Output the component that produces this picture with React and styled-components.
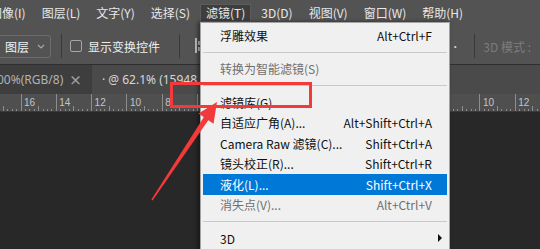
import React from "react";
import styled, { createGlobalStyle, css } from "styled-components";

const GlobalStyle = createGlobalStyle`
	html, body {
		margin: 0;
		padding: 0;
		background: #282828;
		overflow: hidden;
	}
	body {
		font-family: "Noto Sans CJK SC", "Noto Sans", sans-serif;
	}
`;

const menus = ["图像(I)", "图层(L)", "文字(Y)", "选择(S)", "滤镜(T)", "3D(D)", "视图(V)", "窗口(W)", "帮助(H)"];

const filterItems = [
	{ label: "浮雕效果", keys: "Alt+Ctrl+F" },
	{ sep: true },
	{ label: "转换为智能滤镜(S)", disabled: true },
	{ sep: true },
	{ label: "滤镜库(G)..." },
	{ label: "自适应广角(A)...", keys: "Alt+Shift+Ctrl+A" },
	{ label: "Camera Raw 滤镜(C)...", keys: "Shift+Ctrl+A" },
	{ label: "镜头校正(R)...", keys: "Shift+Ctrl+R" },
	{ label: "液化(L)...", keys: "Shift+Ctrl+X", active: true },
	{ label: "消失点(V)...", keys: "Alt+Ctrl+V", disabled: true },
	{ sep: true },
	{ label: "3D", sub: true },
];

// the part of the ruler under the menu is hidden anyway, so only label what shows
const Ruler = () => {
	const major = 35.3;
	const ticks = [];
	const labels = [];
	for (let k = -1; k < 16; k++) {
		const x = 21 + major * k;
		ticks.push(<line key={"M" + k} x1={x} y1={0} x2={x} y2={17} />);
		for (let s = 1; s < 8; s++) {
			const sx = x + (major / 8) * s;
			const h = s === 4 ? 5 : 2;
			ticks.push(<line key={k + "-" + s} x1={sx} y1={17 - h} x2={sx} y2={17} />);
		}
		if (x > 0 && (x < 190 || (x > 452 && x < 525))) {
			labels.push(
				<text key={"t" + k} x={x + 3} y={12}>
					{Math.abs(16 - 2 * k)}
				</text>
			);
		}
	}
	return (
		<RulerSvg width="540" height="17">
			<g stroke="#8d8d8d" strokeWidth="1" shapeRendering="crispEdges">
				{ticks}
			</g>
			<g fill="#c4c4c4" fontSize="10" fontFamily="'Liberation Sans', sans-serif">
				{labels}
			</g>
		</RulerSvg>
	);
};

export default function App() {
	return (
		<Page>
			<GlobalStyle />
			<MenuBar>
				<MenuList>
					{menus.map(m => (
						<MenuTitle key={m} $open={m === "滤镜(T)"}>
							{m}
						</MenuTitle>
					))}
				</MenuList>
			</MenuBar>

			<OptionsBar>
				<LayerSelect>
					图层
					<Chevron viewBox="0 0 8 5" width="8" height="5">
						<path d="M1 1l3 3 3-3" fill="none" stroke="#a8a8a8" strokeWidth="1.2" />
					</Chevron>
				</LayerSelect>
				<Divider $ml={10} />
				<Check />
				<OptionLabel>显示变换控件</OptionLabel>
				<Divider $ml={19} />
				<AlignIcon viewBox="0 0 14 16" width="14" height="16">
					<rect x="0" y="0" width="2" height="15" fill="#bdbdbd" />
					<rect x="3" y="3" width="7" height="4" fill="#bdbdbd" />
					<rect x="3" y="9" width="11" height="4" fill="#bdbdbd" />
				</AlignIcon>
				<RightGroup>
					<Dots>••</Dots>
					<Divider $ml={14} />
					<ModeLabel>3D 模式 :</ModeLabel>
				</RightGroup>
			</OptionsBar>

			<TabBar>
				<Tab>
					<TabText>00%(RGB/8)</TabText>
					<Close>×</Close>
				</Tab>
				<Tab $active>
					<TabText $active>· @ 62.1% (15948</TabText>
				</Tab>
			</TabBar>

			<Ruler />
			<Canvas />

			<Dropdown>
				{filterItems.map((it, i) =>
					it.sep ? (
						<Separator key={i} />
					) : (
						<Item key={i} $active={it.active} $disabled={it.disabled}>
							<span>{it.label}</span>
							{it.keys && <span>{it.keys}</span>}
							{it.sub && <SubArrow />}
						</Item>
					)
				)}
			</Dropdown>

			<Annotation width="540" height="249" viewBox="0 0 540 249">
				<rect x="171.5" y="83.5" width="139" height="23" fill="none" stroke="#f23a3a" strokeWidth="3" />
				<polygon points="151.4,199.6 152.6,200.4 208.8,119.6 204.2,116.4" fill="#f23a3a" />
				<polygon points="217,102 198.5,113.5 213.5,123.8" fill="#f23a3a" />
			</Annotation>
		</Page>
	);
}

const Page = styled.div`
	position: relative;
	width: 540px;
	height: 249px;
	overflow: hidden;
	display: flex;
	flex-direction: column;
	background: #282828;
`;

const MenuBar = styled.div`
	height: 27px;
	flex-shrink: 0;
	background: #535353;
	display: flex;
	align-items: center;
	overflow: hidden;
`;

const MenuList = styled.div`
	display: flex;
	gap: 4px;
	margin-left: -16px;
	margin-top: -1px;
`;

const MenuTitle = styled.div`
	font-size: 12px;
	line-height: 16px;
	height: 16px;
	padding: 0 5px;
	color: #e8e8e8;
	white-space: nowrap;
	border: 1px solid transparent;
	${p =>
		p.$open &&
		css`
			background: #3e3e3e;
			border-color: #5c5c5c;
		`}
`;

const OptionsBar = styled.div`
	height: 36px;
	flex-shrink: 0;
	background: #535353;
	border-bottom: 1px solid #2f2f2f;
	display: flex;
	align-items: center;
	padding-top: 1px;
`;

const LayerSelect = styled.div`
	width: 40px;
	height: 21px;
	padding-left: 5px;
	padding-right: 5px;
	border: 1px solid #6c6c6c;
	border-left: none;
	border-radius: 0 3px 3px 0;
	display: flex;
	align-items: center;
	justify-content: space-between;
	font-size: 12px;
	color: #f2f2f2;
	box-sizing: content-box;
`;

const Chevron = styled.svg`
	display: block;
`;

const Divider = styled.div`
	width: 1px;
	height: 24px;
	margin-left: ${p => p.$ml}px;
	background: #393939;
`;

const Check = styled.div`
	width: 10px;
	height: 10px;
	margin-left: 8px;
	border: 1px solid #a6a6a6;
	border-radius: 2px;
`;

const OptionLabel = styled.span`
	margin-left: 6px;
	font-size: 12px;
	color: #eeeeee;
	white-space: nowrap;
`;

const AlignIcon = styled.svg`
	display: block;
	margin-left: 15px;
`;

const RightGroup = styled.div`
	margin-left: auto;
	display: flex;
	align-items: center;
	padding-right: 9px;
`;

const Dots = styled.span`
	font-size: 10px;
	color: #d0d0d0;
`;

const ModeLabel = styled.span`
	margin-left: 8px;
	font-size: 12px;
	color: #7c7c7c;
	white-space: nowrap;
`;

const TabBar = styled.div`
	height: 29px;
	flex-shrink: 0;
	display: flex;
	background: #3c3c3c;
`;

const Tab = styled.div`
	display: flex;
	align-items: center;
	background: ${p => (p.$active ? "#4a4a4a" : "#3e3e3e")};
	width: ${p => (p.$active ? "auto" : "91px")};
	flex: ${p => (p.$active ? 1 : "none")};
	margin-left: ${p => (p.$active ? "1px" : "0")};
	padding-left: ${p => (p.$active ? "10px" : "0")};
`;

const TabText = styled.span`
	font-family: "Noto Sans", "Noto Sans CJK SC", sans-serif;
	font-size: 12px;
	color: ${p => (p.$active ? "#d6d6d6" : "#b2b2b2")};
	white-space: nowrap;
	margin-left: ${p => (p.$active ? "0" : "-3px")};
`;

const Close = styled.span`
	margin-left: auto;
	margin-right: 9px;
	font-size: 13px;
	font-weight: 700;
	color: #a0a0a0;
`;

const RulerSvg = styled.svg`
	display: block;
	flex-shrink: 0;
	background: #4f4f4f;
	border-bottom: 1px solid #3a3a3a;
`;

const Canvas = styled.div`
	flex: 1;
	background: #282828;
`;

const Dropdown = styled.div`
	position: absolute;
	left: 200px;
	top: 22px;
	width: 248px;
	height: 240px;
	padding-top: 2px;
	background: #f0f0f0;
	border: 1px solid #a3a3a3;
	box-shadow: -2px 0 4px rgba(0, 0, 0, 0.45);
	display: flex;
	flex-direction: column;
`;

const Item = styled.div`
	height: 20.5px;
	margin: 0 2px;
	padding: 0 15px 0 17px;
	display: flex;
	align-items: center;
	justify-content: space-between;
	font-size: 12px;
	white-space: nowrap;
	color: ${p => (p.$disabled ? "#6f6f6f" : "#111111")};
	${p =>
		p.$active &&
		css`
			background: #0078d7;
			color: #ffffff;
		`}
`;

const Separator = styled.div`
	height: 13px;
	margin: 0 2px;
	flex-shrink: 0;
	display: flex;
	align-items: center;
	&::after {
		content: "";
		flex: 1;
		height: 1px;
		background: #c9c9c9;
	}
`;

const SubArrow = styled.span`
	width: 0;
	height: 0;
	margin-right: -10px;
	border-top: 4px solid transparent;
	border-bottom: 4px solid transparent;
	border-left: 4px solid #111111;
`;

const Annotation = styled.svg`
	position: absolute;
	left: 0;
	top: 0;
	pointer-events: none;
`;
